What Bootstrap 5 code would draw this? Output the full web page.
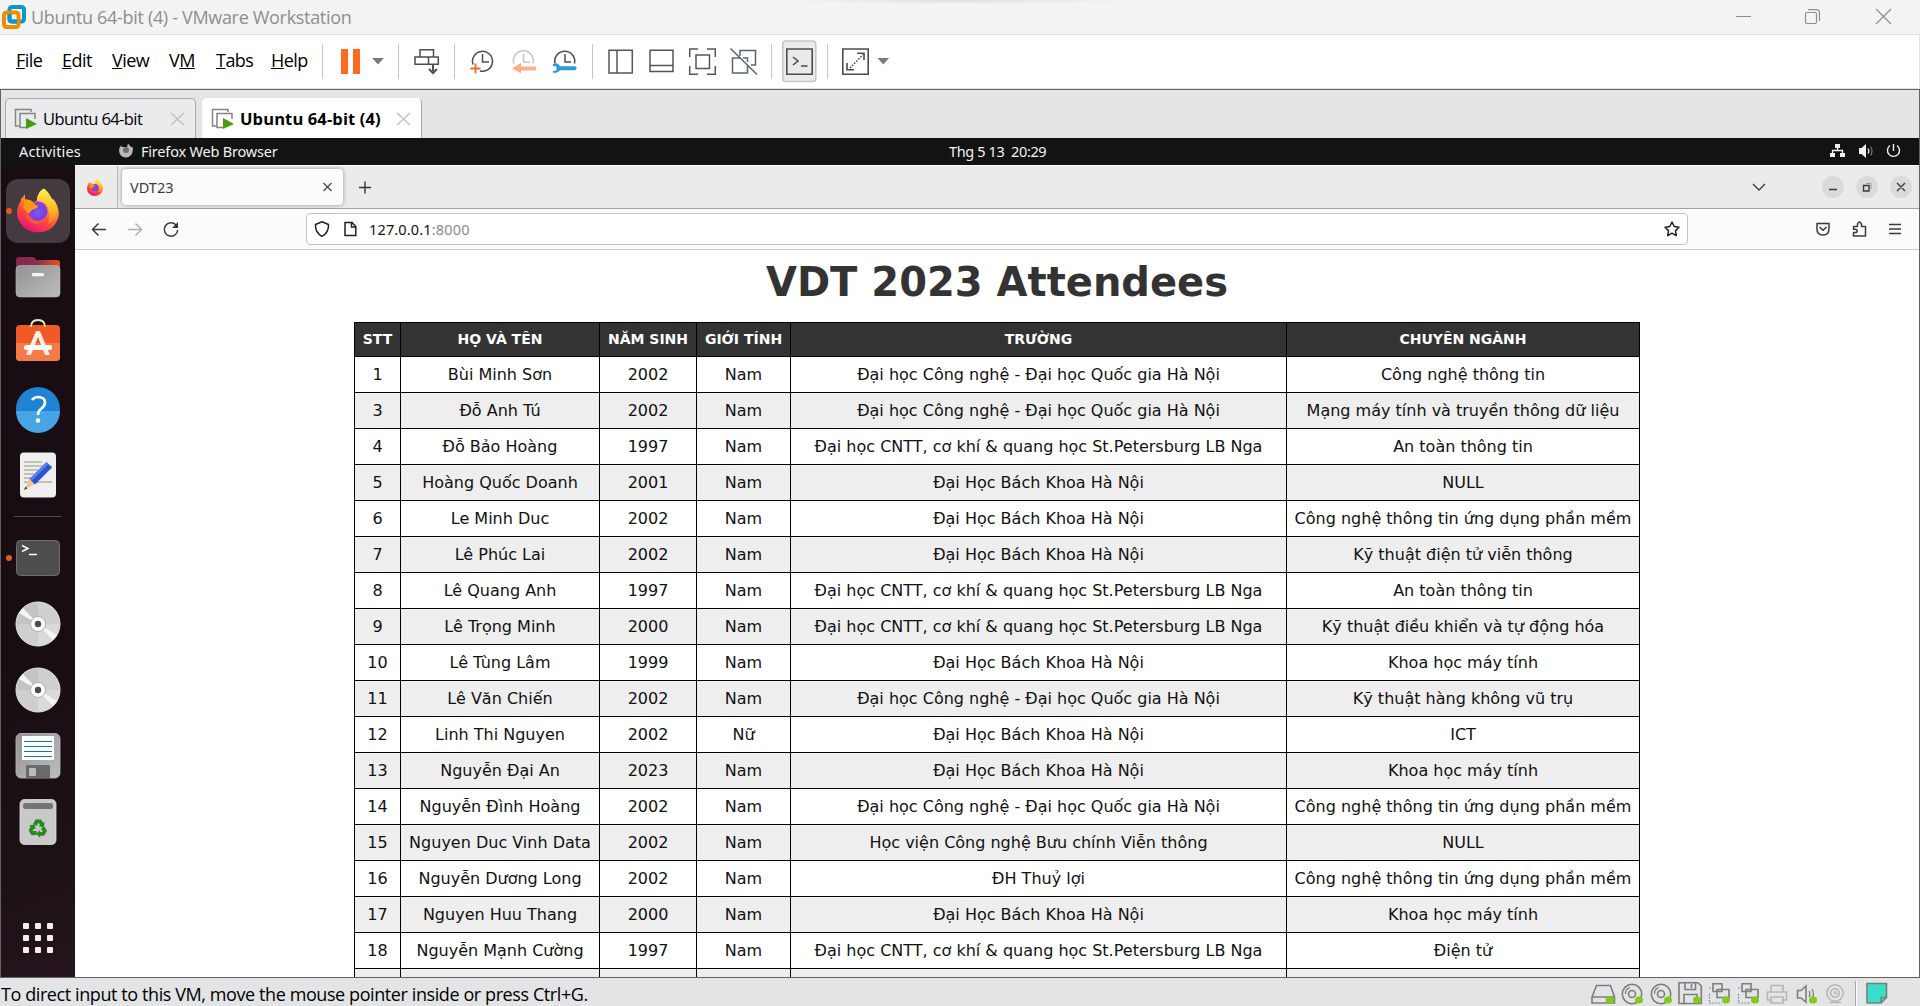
<!DOCTYPE html>
<html lang="vi">
<head>
<meta charset="utf-8">
<title>Ubuntu 64-bit (4) - VMware Workstation</title>
<link rel="stylesheet" href="https://cdn.jsdelivr.net/npm/bootstrap@5.3.0/dist/css/bootstrap.min.css">
<style>
html,body{height:1006px;overflow:hidden}
body{font-family:"Open Sans","Noto Sans",sans-serif;font-size:18px;color:#000;line-height:1}
svg{display:block;flex:none}
svg:not([fill]){fill:none}
.tx{white-space:nowrap;display:block;flex:none}
.titlebar{height:35px;background:radial-gradient(ellipse 170px 4px at 958px 0,#dedede,#f3f3f3);border-bottom:1px solid #e0e0e0;color:#8e8e8e}
.titlebar .tx{line-height:34px;letter-spacing:-.32px}
.menubar{height:54px;background:#fff;border-right:1px solid #e0e0e0;border-bottom:1px solid #e3e3e3}
.menulist{width:322px;flex:none;padding-left:16px;line-height:50px;letter-spacing:-.55px}
.menulist .tx::first-letter{text-decoration:underline}
.menulist .vm::first-letter{text-decoration:none}
.vmframe{height:889px;border:1px solid #636161;background:#e3e4e6}
.vmtabs{height:48px;padding-left:4px;gap:6px}
.vmtab{height:40px;background:#eaebec;border:1px solid #a9a9a9;border-bottom:0;border-radius:5px 5px 0 0;line-height:40px;font-size:16.5px;letter-spacing:-.6px}
.vmtab.on{background:#fff;border-left-color:#fff;border-top-color:#fff;font-weight:700;letter-spacing:.13px}
.gnome{height:27px;background:#131313;color:#f2f2f2;font-family:"Noto Sans",sans-serif;font-size:14.5px;line-height:27px}
.dock{width:74px;background:linear-gradient(160deg,#170d13 60%,#1c1117 85%,#25141d);padding:13px 0 6px}
.fx{font-family:"Noto Sans",sans-serif;font-size:14.5px}
.fxtabs{height:44px;background:#ebebeb;border-top:1px solid #fff;border-bottom:1px solid #a3a3a3}
.fxtab{width:221px;height:36px;background:#fbfbfb;border-radius:4px;box-shadow:0 0 4px rgba(0,0,0,.38);margin:3px 0 0 4px;color:#3c3c3c;line-height:36px}
.pinned{width:43px;border-right:1px solid #b5b5b5}
.fxbar{height:41px;background:#fbfbfb;border-bottom:1px solid #c9c9c9}
.urlbox{width:1382px;height:32px;background:#fff;border:1px solid #c4c4c4;border-radius:4px;line-height:31px;letter-spacing:.15px}
.site{background:#fff;height:727px;font-family:"DejaVu Sans",sans-serif;font-size:16px}
.site h1{font-size:40px;font-weight:700;color:#333;line-height:47px;margin:9px 0 16px}
.people{width:1286px;table-layout:fixed;border-collapse:collapse;color:#111}
.people th,.people td{border:1px solid #000;text-align:center;padding:0;white-space:nowrap;vertical-align:middle}
.people th{height:34px;background:#333;color:#fff;font-size:14px;line-height:17px}
.people td{height:36px;line-height:19px}
.people tbody tr:nth-child(even){background:#eee}
.status{height:28px;background:#e3e4e6;line-height:33px}
.status .tx{letter-spacing:-.41px;padding-left:1px}
</style>
</head>
<body>
<svg width="0" height="0" class="position-absolute"><defs>
<linearGradient id="ga" x1=".8" y1="0" x2=".3" y2="1"><stop offset="0" stop-color="#fff44f"/><stop offset=".35" stop-color="#ffa51e"/><stop offset=".65" stop-color="#ff4b3a"/><stop offset="1" stop-color="#e5107c"/></linearGradient>
<radialGradient id="gb" cx=".5" cy=".6" r=".6"><stop offset="0" stop-color="#8058f0"/><stop offset=".6" stop-color="#7542e5"/><stop offset="1" stop-color="#a63ad6"/></radialGradient>
<linearGradient id="gy" x1="0" y1="0" x2="0" y2="1"><stop offset="0" stop-color="#fff04a"/><stop offset=".6" stop-color="#ffb52a"/><stop offset="1" stop-color="#ff7a2a"/></linearGradient>
<linearGradient id="gf" x1="0" y1="0" x2="1" y2="1"><stop offset="0" stop-color="#929292"/><stop offset="1" stop-color="#bdbdbd"/></linearGradient>
<linearGradient id="gt" x1="0" y1="0" x2="1" y2="0"><stop offset="0" stop-color="#7c2850"/><stop offset=".5" stop-color="#8f3048"/><stop offset="1" stop-color="#e9541f"/></linearGradient>
<symbol id="fox" viewBox="0 0 42 44"><path d="M27 0C31 4 32 8 33 10L36 13V10C41 16 43 24 41 30C38 39 30 44 21 44C10 44 1 36 0 25C0 19 2 15 4 12V9L5 10C6 8 7 7 8 6V11C11 11 14 11 16 14L20 12C20 7 23 2 27 0Z" fill="url(#ga)"/><path d="M27 0C33 5 34 9 38 15C42 24 38 33 30 36C34 30 33 22 29 16C25 14 21 13 20 12C20 7 23 2 27 0Z" fill="url(#gy)"/><circle cx="21" cy="22.500" r="9.700" fill="url(#gb)"/><path d="M8 11C12 11 15 12 17 15C19 17 21 17 21 18C20 20 18 20 16 21C14 22 13 24 12 25C10 25 8 20 6 20Z" fill="#ff980f"/><path d="M11 26C13 32 21 35 27 31C24 38 12 36 9 28Z" fill="#ff5a35"/></symbol>
<symbol id="disc" viewBox="0 0 46 46"><circle cx="23" cy="23" r="22" fill="#cfcfcf" stroke="#e9e9e9"/><path d="M23 23V1.500A21.500 21.500 0 0 0 1.500 23Z" fill="#c4c4c4"/><path d="M23 23V44.500A21.500 21.500 0 0 0 44.500 23Z" fill="#dadada"/><path d="M23 23L4 12L8 7ZM23 23L42 34L38 39Z" fill="#f6f6f4"/><circle cx="23" cy="23" r="7.500" fill="#fff" stroke="#b5b0a3"/><circle cx="23" cy="23" r="3.200" fill="#4b4b4b"/></symbol>
<symbol id="vmi" viewBox="0 0 24 24"><path d="M6 19H1.500V2.500H17V5" stroke="#858585" stroke-width="1.500"/><path d="M13 20.500H6V6.500H21V12" stroke="#858585" stroke-width="1.500"/><path d="M12 11L23 17L12 22Z" fill="#479c10"/></symbol>
</defs></svg>

<header class="titlebar d-flex">
<svg width="31" height="34" viewBox="0 0 31 34"><rect x="9.500" y="7" width="14.500" height="14.500" rx="2.500" stroke="#0d95d2" stroke-width="4"/><rect x="4" y="12.500" width="14.500" height="14.500" rx="2.500" stroke="#f38b00" stroke-width="4"/><path d="M9.500 14V19Q9.500 21.500 12 21.500H17" stroke="#0d95d2" stroke-width="4"/></svg>
<span class="tx">Ubuntu 64-bit (4) - VMware Workstation</span>
<svg class="ms-auto" width="200" height="34" viewBox="1720 0 200 34" stroke="#8e8e8e" stroke-width="1.200"><path d="M1736 16.500H1751M1876 9L1891 24M1891 9L1876 24"/><rect x="1805.500" y="12.500" width="11" height="11" rx="1.500"/><path d="M1808 9.700H1816Q1819.500 9.700 1819.500 13V21"/></svg>
</header>

<nav class="menubar d-flex">
<div class="menulist d-flex">
<span class="tx" style="width:46px">File</span><span class="tx" style="width:50px">Edit</span><span class="tx" style="width:57px">View</span><span class="tx vm" style="width:47px">V<u>M</u></span><span class="tx" style="width:55px">Tabs</span><span class="tx">Help</span>
</div>
<svg width="76" height="53" viewBox="322 35 76 53"><path d="M322.500 44V79" stroke="#c6c6c6"/><path d="M341 49h7v25h-7zM353 49h7v25h-7z" fill="#ff6b1c"/><path d="M372 58H384L378 64.500Z" fill="#7b7b7b"/></svg>
<svg width="56" height="53" viewBox="398 35 56 53" stroke="#4d4d4d" stroke-width="1.500"><path d="M398.500 44V79" stroke="#c6c6c6" stroke-width="1"/><path d="M420 57V49.700H433.500V57M415 57H438.300V64.300H415ZM428.500 57V64.300"/><path d="M433 65V71M429 69L433 73L437 69" stroke-width="2"/></svg>
<svg width="138" height="53" viewBox="454 35 138 53" stroke="#4d4d4d" stroke-width="1.500"><path d="M454.500 44V79" stroke="#c6c6c6" stroke-width="1"/><path d="M473 64.500A10 10 0 1 1 480 71M482.500 54V62H489"/><path d="M475.500 63.500V73.500M470.500 68.500H480.500" stroke="#f2682a" stroke-width="1.800"/><g stroke="#c6c6c6"><path d="M513.800 63.500A10 10 0 1 1 533 63.500M523.500 54V62H530"/></g><path d="M512 68.300L521 63V66.500H536V70.500H521V73.500Z" fill="#ffae88" stroke="none"/><path d="M555 63.500A10 10 0 1 1 574.500 63.500M565 54V62H571"/><path d="M560 66.200H574.500Q577 66.500 576.500 68.500Q576 70.200 574.500 70.200H560Q557 74 553 72.500V71L556.500 70.500V66.500L553 66V64Q558 62 560 66.200Z" fill="#2c99da" stroke="none"/></svg>
<svg width="179" height="53" viewBox="592 35 179 53" stroke="#555" stroke-width="1.500"><path d="M592.500 44V79" stroke="#c6c6c6" stroke-width="1"/><path d="M609 50.200H632.300V73H609ZM617 50V73M650 50.200H673V71.500H650ZM650 65.500H673"/><path d="M689.700 57V49H698M707 49H715.300V57M715.300 66V74.300H707M698 74.300H689.700V66M696 55H709.500V68.500H696Z"/><path d="M740 56V50.500H755.500V65H751M741 58H732.500V73H747.500V66M730.500 48.500L757 74.500M743 58H747.500V62" stroke="#566573"/></svg>
<svg width="56" height="53" viewBox="771 35 56 53" stroke="#4d4d4d" stroke-width="1.600"><path d="M771.500 44V79" stroke="#c6c6c6" stroke-width="1"/><rect x="782.800" y="41" width="33" height="40.500" rx="3" fill="#e9eaeb" stroke="#c6c6c6"/><path d="M786.800 49H812.200V74.300H786.800ZM793 57L798 61L793 65M801 66H807.500"/></svg>
<svg width="70" height="53" viewBox="827 35 70 53" stroke="#4d4d4d" stroke-width="1.600"><path d="M827.500 44V79" stroke="#c6c6c6" stroke-width="1"/><path d="M842.800 49H868.200V74.300H842.800ZM857 53.200H864V60M847 63V69.800H854"/><path d="M850 68L863 54.500" stroke-dasharray="1.500 1.500"/><path d="M877.500 58H889L883.300 64.500Z" fill="#7b7b7b" stroke="none"/></svg>
</nav>

<main class="vmframe">
<div class="vmtabs d-flex align-items-end">
<div class="vmtab d-flex align-items-center" style="width:191px"><svg class="ms-2" width="24" height="24"><use href="#vmi"/></svg><span class="tx" style="width:123px;margin-left:5px">Ubuntu 64-bit</span><svg width="24" height="14" stroke="#c2c2c2" stroke-width="1.500"><path d="M5 1L18 13M18 1L5 13"/></svg></div>
<div class="vmtab on d-flex align-items-center" style="width:220px"><svg class="ms-2" width="24" height="24"><use href="#vmi"/></svg><span class="tx" style="width:150px;margin-left:5px">Ubuntu 64-bit (4)</span><svg width="24" height="14" stroke="#c2c2c2" stroke-width="1.500"><path d="M7 1L20 13M20 1L7 13"/></svg></div>
</div>
<div class="gnome d-flex">
<span class="tx" style="width:100px;padding-left:18px;letter-spacing:.15px">Activities</span>
<svg width="40" height="27" viewBox="101 0 40 27"><path d="M128 5.500L131 9L132.500 9C134 14 131 19.500 126 19.500C121 19.500 118 15 119.500 10L121 7.500L122 9L127 9Z" fill="#b9b9b9"/><circle cx="126" cy="12" r="3" fill="#6e6e6e"/></svg>
<span class="tx" style="width:808px;letter-spacing:-.2px">Firefox Web Browser</span>
<span class="tx" style="letter-spacing:-.38px">Thg 5 13&nbsp; 20:29</span>
<svg class="ms-auto" width="100" height="27" viewBox="1819 138 100 27" fill="#f2f2f2"><path d="M1835 144h5v4h-5zM1830 153h5v4h-5zM1840 153h5v4h-5z"/><path d="M1837.500 147V150.500M1832.500 154V150.500H1842.500V154" stroke="#f2f2f2" stroke-width="1.300" fill="none"/><path d="M1859 148H1861.500L1866 144V158L1861.500 154H1859Z"/><path d="M1868 148.500Q1869.800 151 1868 153.500" fill="none" stroke="#f2f2f2" stroke-width="1.200"/><path d="M1870.500 146.500Q1873.500 151 1870.500 155.500" fill="none" stroke="#777" stroke-width="1.200"/><path d="M1890 145.500A6 6 0 1 0 1897 145.500M1893.500 144V151" fill="none" stroke="#f2f2f2" stroke-width="1.400"/></svg>
</div>
<div class="d-flex" style="height:812px">
<aside class="dock d-flex flex-column">
<svg width="74" height="66" viewBox="1 178 74 66"><rect x="6" y="179" width="64" height="64" rx="12" fill="#433b40"/><circle cx="9" cy="211" r="3" fill="#e95420"/><use href="#fox" x="17" y="188.500" width="42" height="44"/></svg>
<svg width="74" height="66" viewBox="1 244 74 66"><path d="M16 270V260Q16 257 19 257H33Q35 257 36 260H57Q60 260 60 263V272H16Z" fill="url(#gt)"/><rect x="16" y="265.500" width="44" height="31.500" rx="4" fill="url(#gf)" stroke="#b5b5b5" stroke-width=".6"/><rect x="32" y="273" width="12" height="3.200" rx="1" fill="#f4f4f4"/></svg>
<svg width="74" height="66" viewBox="1 310 74 66"><rect x="16" y="325" width="44" height="36" rx="4" fill="#f15a24"/><path d="M16 343H60V357Q60 361 56 361H20Q16 361 16 357Z" fill="#f47b48"/><path d="M31 327Q31 320 38 320Q45 320 45 327" stroke="#fbe3c2" stroke-width="1.800"/><path d="M36 331H40L50 355H45L38 337L31 355H26Z" fill="#fbeee6"/><rect x="24" y="345" width="28" height="5" rx="2" fill="#fff"/></svg>
<svg width="74" height="66" viewBox="1 376 74 66"><circle cx="38" cy="409" r="22" fill="#1f82d3"/><path d="M16 411A22 22 0 0 0 60 411Z" fill="#45a5e5"/><path d="M32 400Q34 397 38.500 397Q45 397.500 45 402.500Q45 406 41 409Q38 411 38 415" stroke="#fff" stroke-width="2.700"/><circle cx="38" cy="420.500" r="2.300" fill="#fff"/></svg>
<svg width="74" height="66" viewBox="1 442 74 66"><rect x="20" y="452.500" width="36" height="45" rx="4" fill="#efefef"/><path d="M24 462H42M24 466H45M24 470H38M24 474H34M24 478H32M24 482H52M50 466H52" stroke="#c5c1b2" stroke-width="1.800"/><path d="M24 490L30 478L35 484Z" fill="#fbc48f"/><path d="M24 490L25.500 486.500L27.500 488.500Z" fill="#3e3e3e"/><path d="M29.500 479L46.500 462L52 467.500L35 484.500Z" fill="#2b55cf"/><path d="M29.500 479L46.500 462L48.500 464L31.500 481Z" fill="#5583ee"/></svg>
<svg width="74" height="17" viewBox="1 508 74 17"><path d="M14 516.500H62" stroke="#4f494c"/></svg>
<svg width="74" height="66" viewBox="1 525 74 66"><circle cx="9" cy="558" r="3" fill="#e95420"/><rect x="16.500" y="540.500" width="43" height="35" rx="4" fill="#4d4d4d" stroke="#6e6e6e"/><path d="M22 545.500L28 548.500L22 551.500M29 554.500H37" stroke="#fff" stroke-width="1.500"/></svg>
<svg width="74" height="66"><use href="#disc" x="14" y="10" width="46" height="46"/></svg>
<svg width="74" height="66"><use href="#disc" x="14" y="10" width="46" height="46"/></svg>
<svg width="74" height="66" viewBox="1 723 74 66"><rect x="16" y="733.500" width="44" height="44.500" rx="5" fill="url(#gf)" stroke="#bdbdbd" stroke-width=".8"/><path d="M22 736H54V760H22Z" fill="#fff"/><path d="M24 741.500H52M24 746.500H52M24 751.500H52M24 756.500H52" stroke="#1377a8"/><path d="M26 778V766Q26 765 27 765H49Q50 765 50 766V778Z" fill="#6a6a6a"/><rect x="29" y="768" width="7" height="8" rx="1" fill="#bcbcbc"/></svg>
<svg width="74" height="66" viewBox="1 789 74 66"><rect x="20" y="799.500" width="36" height="45" rx="4.500" fill="#c9c9c9" stroke="#dedede" stroke-width=".8"/><rect x="23" y="803" width="30" height="6" rx="2.500" fill="#757575"/><g fill="#27881d"><path id="rc" d="M33 824L35.500 819.500H41L43.500 823L45 822L43.500 827.500L38.500 826L40 825L38.500 822.500L36.500 826Z"/><use href="#rc" transform="rotate(120 38 828.500)"/><use href="#rc" transform="rotate(240 38 828.500)"/></g></svg>
<svg class="mt-auto" width="74" height="66" viewBox="1 905 74 66" fill="#f0efec"><g id="dots"><rect x="23" y="923" width="6" height="6" rx="1"/><rect x="35" y="923" width="6" height="6" rx="1"/><rect x="47" y="923" width="6" height="6" rx="1"/></g><use href="#dots" y="12"/><use href="#dots" y="24"/></svg>
</aside>
<section class="fx flex-grow-1">
<div class="fxtabs d-flex">
<div class="pinned d-flex align-items-center justify-content-center"><svg width="16" height="17" style="margin-right:3px"><use href="#fox" width="16" height="17"/></svg></div>
<div class="fxtab d-flex align-items-center"><span class="tx" style="width:197px;padding-left:8px">VDT23</span><svg width="20" height="12" stroke="#444" stroke-width="1.200"><path d="M4.500 2L12.500 10M12.500 2L4.500 10"/></svg></div>
<svg width="40" height="42" viewBox="343 166 40 42"><path d="M365 181.500V193.500M359 187.500H371" stroke="#333" stroke-width="1.400"/></svg>
<svg class="ms-auto" width="179" height="42" viewBox="1740 166 179 42" stroke="#3b3b3b" stroke-width="1.400"><path d="M1753 184L1759 190L1765 184"/><g fill="#dadada" stroke="none"><circle cx="1833" cy="187" r="11"/><circle cx="1867" cy="187" r="11"/><circle cx="1901" cy="187" r="11"/></g><path d="M1829 189.500H1837M1863.500 185.500H1869V191H1863.500ZM1897 183L1905 191M1905 183L1897 191"/><path d="M1866 183.500H1871V189" stroke="#999" stroke-width="1"/></svg>
</div>
<div class="fxbar d-flex align-items-center">
<svg width="231" height="40" viewBox="75 209 231 40" stroke="#3b3b3b" stroke-width="1.500"><path d="M106 229.500H92.500M98.500 223.500L92.500 229.500L98.500 235.500"/><path d="M128 229.500H141.500M135.500 223.500L141.500 229.500L135.500 235.500" stroke="#b0b0b0"/><path d="M176 225A6.700 6.700 0 1 0 177.700 230"/><path d="M178 222V228H172Z" fill="#3b3b3b" stroke="none"/></svg>
<div class="urlbox d-flex align-items-center">
<svg width="62" height="30" viewBox="307 214 62 30" stroke="#222" stroke-width="1.500"><path d="M322 221.700L328.500 224.500Q329 232.500 322 236.300Q315 232.500 315.500 224.500Z" stroke-linejoin="round"/><path d="M345 222.500H352L355.800 226.500V235.500H345ZM351.500 222.500V227H356"/></svg>
<span class="tx" style="color:#111">127.0.0.1</span><span class="tx" style="color:#8b8b8b">:8000</span>
<svg class="ms-auto" width="30" height="30" viewBox="1657 214 30 30" stroke="#222" stroke-width="1.500" stroke-linejoin="round"><path d="M1672 222L1674.200 226.500L1679 227.200L1675.500 230.600L1676.300 235.600L1672 233.200L1667.700 235.600L1668.500 230.600L1665 227.200L1669.800 226.500Z"/></svg>
</div>
<svg width="231" height="40" viewBox="1688 209 231 40" stroke="#3b3b3b" stroke-width="1.500" stroke-linejoin="round"><path d="M1817 223.500H1829V229Q1829 235 1823 235Q1817 235 1817 229ZM1819.500 227L1823 230.300L1826.500 227"/><path d="M1853.500 226.500H1857.500V224Q1859.500 220 1861.500 224V226.500H1865.500V236H1853.500V232.500H1856Q1858.500 231 1856 229.300H1853.500Z"/><path d="M1889 224.500H1901M1889 229H1901M1889 233.500H1901"/></svg>
</div>
<div class="site overflow-hidden">
<h1 class="text-center">VDT 2023 Attendees</h1>
<table class="people mx-auto">
<colgroup><col style="width:46px"><col style="width:199px"><col style="width:97px"><col style="width:94px"><col style="width:496px"><col style="width:353px"></colgroup>
<thead><tr><th>STT</th><th>HỌ VÀ TÊN</th><th>NĂM SINH</th><th>GIỚI TÍNH</th><th>TRƯỜNG</th><th>CHUYÊN NGÀNH</th></tr></thead>
<tbody>
<tr><td>1</td><td>Bùi Minh Sơn</td><td>2002</td><td>Nam</td><td>Đại học Công nghệ - Đại học Quốc gia Hà Nội</td><td>Công nghệ thông tin</td></tr>
<tr><td>3</td><td>Đỗ Anh Tú</td><td>2002</td><td>Nam</td><td>Đại học Công nghệ - Đại học Quốc gia Hà Nội</td><td>Mạng máy tính và truyền thông dữ liệu</td></tr>
<tr><td>4</td><td>Đỗ Bảo Hoàng</td><td>1997</td><td>Nam</td><td>Đại học CNTT, cơ khí &amp; quang học St.Petersburg LB Nga</td><td>An toàn thông tin</td></tr>
<tr><td>5</td><td>Hoàng Quốc Doanh</td><td>2001</td><td>Nam</td><td>Đại Học Bách Khoa Hà Nội</td><td>NULL</td></tr>
<tr><td>6</td><td>Le Minh Duc</td><td>2002</td><td>Nam</td><td>Đại Học Bách Khoa Hà Nội</td><td>Công nghệ thông tin ứng dụng phần mềm</td></tr>
<tr><td>7</td><td>Lê Phúc Lai</td><td>2002</td><td>Nam</td><td>Đại Học Bách Khoa Hà Nội</td><td>Kỹ thuật điện tử viễn thông</td></tr>
<tr><td>8</td><td>Lê Quang Anh</td><td>1997</td><td>Nam</td><td>Đại học CNTT, cơ khí &amp; quang học St.Petersburg LB Nga</td><td>An toàn thông tin</td></tr>
<tr><td>9</td><td>Lê Trọng Minh</td><td>2000</td><td>Nam</td><td>Đại học CNTT, cơ khí &amp; quang học St.Petersburg LB Nga</td><td>Kỹ thuật điều khiển và tự động hóa</td></tr>
<tr><td>10</td><td>Lê Tùng Lâm</td><td>1999</td><td>Nam</td><td>Đại Học Bách Khoa Hà Nội</td><td>Khoa học máy tính</td></tr>
<tr><td>11</td><td>Lê Văn Chiến</td><td>2002</td><td>Nam</td><td>Đại học Công nghệ - Đại học Quốc gia Hà Nội</td><td>Kỹ thuật hàng không vũ trụ</td></tr>
<tr><td>12</td><td>Linh Thi Nguyen</td><td>2002</td><td>Nữ</td><td>Đại Học Bách Khoa Hà Nội</td><td>ICT</td></tr>
<tr><td>13</td><td>Nguyễn Đại An</td><td>2023</td><td>Nam</td><td>Đại Học Bách Khoa Hà Nội</td><td>Khoa học máy tính</td></tr>
<tr><td>14</td><td>Nguyễn Đình Hoàng</td><td>2002</td><td>Nam</td><td>Đại học Công nghệ - Đại học Quốc gia Hà Nội</td><td>Công nghệ thông tin ứng dụng phần mềm</td></tr>
<tr><td>15</td><td>Nguyen Duc Vinh Data</td><td>2002</td><td>Nam</td><td>Học viện Công nghệ Bưu chính Viễn thông</td><td>NULL</td></tr>
<tr><td>16</td><td>Nguyễn Dương Long</td><td>2002</td><td>Nam</td><td>ĐH Thuỷ lợi</td><td>Công nghệ thông tin ứng dụng phần mềm</td></tr>
<tr><td>17</td><td>Nguyen Huu Thang</td><td>2000</td><td>Nam</td><td>Đại Học Bách Khoa Hà Nội</td><td>Khoa học máy tính</td></tr>
<tr><td>18</td><td>Nguyễn Mạnh Cường</td><td>1997</td><td>Nam</td><td>Đại học CNTT, cơ khí &amp; quang học St.Petersburg LB Nga</td><td>Điện tử</td></tr>
<tr><td></td><td></td><td></td><td></td><td></td><td></td></tr>
</tbody>
</table>
</div>
</section>
</div>
</main>

<footer class="status d-flex">
<span class="tx">To direct input to this VM, move the mouse pointer inside or press Ctrl+G.</span>
<svg class="ms-auto" width="340" height="28" viewBox="1580 978 340 28" stroke="#7d7d7d" stroke-width="1.600">
<path d="M1592 997L1596.500 985.500H1610.500L1614.500 997V1003H1592ZM1592 997H1614"/>
<g id="cds"><circle cx="1632" cy="994" r="9.700"/><circle cx="1632" cy="994" r="3.500"/><path d="M1625.500 994A6.500 6.500 0 0 1 1630 987.500" stroke-width="1.200"/></g><use href="#cds" x="29"/>
<path d="M1679 982.700H1698L1701.300 986V1003.500H1679ZM1685 982.700V989.500H1695.500V982.700M1691.500 984V988M1684 1003.500V994.500H1697V1003.500"/>
<g id="nets"><path d="M1713 983.700H1722V991.500H1713ZM1717 989.500H1729V997.500H1717Z" fill="#e3e4e6"/><path d="M1709 988H1713M1709.500 994V1003H1722" stroke-dasharray="1.500 1.500" stroke-width="1.200"/></g><use href="#nets" x="29"/>
<g stroke="#b5b6b8"><path d="M1771 992V985.500H1783V992M1771 1000H1767.500V992H1786.500V1000H1783M1771 997H1783V1003H1771Z"/><circle cx="1835" cy="993" r="8.200"/><circle cx="1835" cy="993" r="4.200"/><path d="M1835 991V993.500H1837M1829 1002.500H1841"/></g>
<path d="M1797.500 990.500H1801L1806 986V1002L1801 998H1797.500Z"/><path d="M1809 991Q1811 994 1809 997M1812 989Q1815 994 1812 998" stroke-width="1.300"/>
<g fill="#84c81a" stroke="none"><ellipse cx="1610" cy="1000" rx="4.500" ry="3.500"/><ellipse cx="1639" cy="1000" rx="4" ry="3.500"/><ellipse cx="1668" cy="1000" rx="4" ry="3.500"/><ellipse cx="1697" cy="1000" rx="4" ry="3.500"/><ellipse cx="1726" cy="1000" rx="4" ry="3.500"/><ellipse cx="1755" cy="1000" rx="4" ry="3.500"/><ellipse cx="1813" cy="1000" rx="4" ry="3.500"/></g>
<path d="M1855.500 981V1006" stroke="#a8a8a8" stroke-width="1"/><path d="M1856.500 981V1006" stroke="#fff" stroke-width="1"/>
<path d="M1867 983.500H1886.500V997.500L1881 1003H1867Z" fill="#37dfca"/><path d="M1881 1003V997.500H1886.500" stroke-width="1.300"/>
</svg>
</footer>
<script src="https://cdn.jsdelivr.net/npm/bootstrap@5.3.0/dist/js/bootstrap.bundle.min.js"></script>
</body>
</html>
